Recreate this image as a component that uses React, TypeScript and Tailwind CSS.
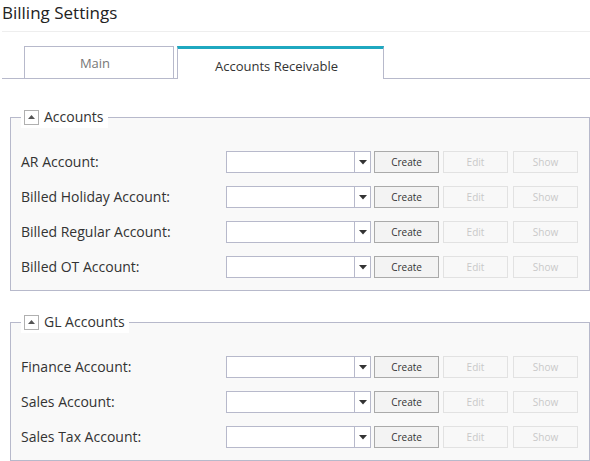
import type { ReactNode } from "react";

const font = { fontFamily: '"Open Sans", "Segoe UI", sans-serif' };

function Collapse() {
  return (
    <span className="w-[15px] h-[15px] border border-[#b0b0b0] bg-white flex items-center justify-center">
      <svg width="9" height="6" viewBox="0 0 9 6">
        <path d="M1 5 L4.5 1 L8 5 Z" fill="#555" />
      </svg>
    </span>
  );
}

function AccountRow({ label }: { label: string }) {
  return (
    <div className="flex items-center h-[22px]">
      <div className="w-[205px] text-[14px] text-[#333] leading-none">{label}</div>
      <div className="w-[145px] h-[22px] flex border border-[#b7b9cb] bg-white">
        <div className="flex-1" />
        <div className="w-[16px] border-l border-[#b7b9cb] flex items-center justify-center">
          <svg width="8" height="5" viewBox="0 0 8 5">
            <path d="M0 0 L8 0 L4 4.5 Z" fill="#333" />
          </svg>
        </div>
      </div>
      <button className="ml-[3px] w-[65px] h-[22px] border border-[#aaaaaa] bg-[#f3f3f3] text-[10px] text-[#333]">
        Create
      </button>
      <button className="ml-[4px] w-[65px] h-[22px] border border-[#e2e2e2] bg-[#f8f8f8] text-[10px] text-[#c9c9c9]">
        Edit
      </button>
      <button className="ml-[5px] w-[65px] h-[22px] border border-[#e2e2e2] bg-[#f8f8f8] text-[10px] text-[#c9c9c9]">
        Show
      </button>
    </div>
  );
}

function Group({ title, children }: { title: string; children: ReactNode }) {
  return (
    <fieldset className="ml-[10px] w-[580px] border border-[#b7b9cb] bg-[#f9f9f9] px-[10px] pt-[23px] pb-[12px] flex flex-col gap-[13px]">
      <legend className="h-[22px] bg-white pl-[3px] pr-[4px] flex items-center gap-[5px]">
        <Collapse />
        <span className="text-[14px] text-[#333] leading-none">{title}</span>
      </legend>
      {children}
    </fieldset>
  );
}

export default function App() {
  return (
    <div className="w-[590px] h-[461px] bg-white overflow-hidden" style={font}>
      <div className="ml-[2px] h-[32px] border-b border-[#eeeeee] pt-[2px]">
        <h1 className="text-[17px] text-[#222] leading-[22px]">Billing Settings</h1>
      </div>

      <div className="ml-[2px] mt-[14px] h-[33px] border-b border-[#b7b9cb] flex pl-[22px]">
        <div className="w-[150px] h-[32px] border border-b-0 border-[#b7b9cb] bg-white flex items-center justify-center pt-[3px] pr-[8px] text-[13px] text-[#777]">
          Main
        </div>
        <div className="ml-[3px] w-[207px] h-[33px] border-t-[3px] border-t-[#1fa8c0] border-x border-[#b7b9cb] bg-white flex items-center justify-center pt-[6px] pr-[8px] text-[13px] text-[#333]">
          Accounts Receivable
        </div>
      </div>

      <div className="mt-[27px] flex flex-col gap-[20px]">
        <Group title="Accounts">
          <AccountRow label="AR Account:" />
          <AccountRow label="Billed Holiday Account:" />
          <AccountRow label="Billed Regular Account:" />
          <AccountRow label="Billed OT Account:" />
        </Group>
        <Group title="GL Accounts">
          <AccountRow label="Finance Account:" />
          <AccountRow label="Sales Account:" />
          <AccountRow label="Sales Tax Account:" />
        </Group>
      </div>
    </div>
  );
}
